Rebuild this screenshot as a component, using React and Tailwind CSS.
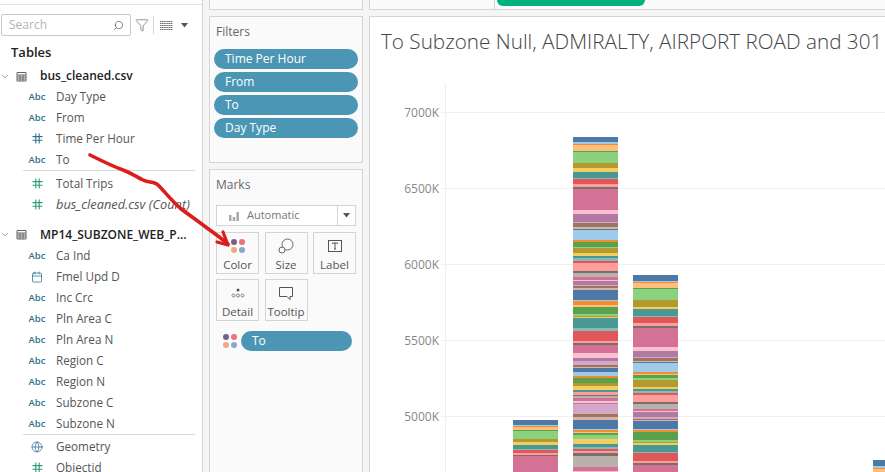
import React from 'react';
import { Search, Filter, ChevronDown, Calendar, Globe } from 'lucide-react';

const font = { fontFamily: '"Open Sans", sans-serif' };

const C = {
  blue: '#4e79a7', lblue: '#a0cbe8', orange: '#f28e2b', lorange: '#ffbe7d', green: '#59a14f',
  lgreen: '#8cd17d', olive: '#b6992d', yellow: '#f1ce63', teal: '#499894', lteal: '#86bcb6',
  red: '#e15759', lred: '#ff9d9a', grey: '#79706e', lgrey: '#bab0ac', pink: '#d37295',
  lpink: '#fabfd2', purple: '#b07aa1', lpurple: '#d4a6c8', brown: '#9d7660', lbrown: '#d7b5a6',
};

// stops are [color, end] in 3x zoom pixels, measured from the base y
const bars = [
  {
    x: 513, base: 295, start: 375,
    stops: [['blue', 390], ['lblue', 393], ['orange', 396], ['lorange', 405], ['green', 408], ['lgreen', 432], ['olive', 441], ['yellow', 450], ['teal', 462], ['lteal', 465], ['red', 474], ['lred', 480], ['grey', 483], ['pink', 531]],
  },
  {
    x: 573, base: 130, start: 21,
    stops: [['blue', 36], ['lblue', 42], ['orange', 45], ['lorange', 63], ['green', 66], ['lgreen', 99], ['olive', 114], ['yellow', 126], ['teal', 144], ['lteal', 148], ['red', 162], ['lred', 171], ['grey', 177], ['pink', 240], ['lpink', 252], ['purple', 276], ['lpurple', 279], ['brown', 291], ['lbrown', 297], ['blue', 300], ['lblue', 330], ['orange', 335], ['green', 351], ['lgreen', 354], ['olive', 369], ['yellow', 378], ['teal', 384], ['lteal', 393], ['red', 399], ['lred', 423], ['grey', 429], ['lgrey', 441], ['pink', 450], ['lpink', 453], ['purple', 465], ['lpurple', 468], ['brown', 474], ['lbrown', 480], ['blue', 510],
      ['lblue', 512], ['orange', 525], ['lorange', 531], ['green', 552], ['lgreen', 558], ['olive', 561], ['yellow', 564], ['teal', 594], ['lteal', 603], ['red', 633], ['lred', 639], ['grey', 645], ['pink', 669], ['lpink', 684], ['purple', 692], ['lpurple', 705], ['brown', 711], ['lbrown', 714], ['blue', 726], ['lblue', 738], ['orange', 744], ['green', 759], ['olive', 767], ['yellow', 780], ['teal', 786], ['lred', 795], ['grey', 798], ['lgrey', 804], ['pink', 813], ['lpink', 819], ['purple', 822], ['lpurple', 852], ['brown', 861], ['lbrown', 870], ['blue', 897], ['lblue', 900], ['orange', 906], ['lorange', 909], ['green', 914], ['lgreen', 927], ['yellow', 942], ['teal', 951], ['lteal', 957], ['red', 963], ['lred', 969], ['grey', 978], ['lgrey', 1011], ['pink', 1023], ['lpink', 1026]],
  },
  {
    x: 633, base: 130, start: 435,
    stops: [['blue', 453], ['lblue', 457], ['orange', 459], ['lorange', 474], ['green', 477], ['lgreen', 510],
      ['olive', 531], ['yellow', 537], ['teal', 558], ['lteal', 561], ['red', 579], ['lred', 588], ['grey', 594], ['pink', 651], ['lpink', 663], ['purple', 681], ['lpurple', 685], ['brown', 693], ['lbrown', 696], ['blue', 699], ['lblue', 726], ['orange', 731], ['lorange', 735], ['green', 744], ['lgreen', 750], ['olive', 771], ['yellow', 777], ['teal', 783], ['lteal', 789], ['red', 795], ['lred', 816], ['grey', 822], ['lgrey', 837], ['pink', 843], ['lpink', 846], ['purple', 861], ['lpurple', 867], ['brown', 870], ['lbrown', 873], ['blue', 897], ['lblue', 900], ['orange', 906], ['green', 930], ['lgreen', 936], ['olive', 939], ['yellow', 945], ['teal', 966], ['lteal', 969], ['red', 993], ['lred', 999], ['grey', 1004], ['pink', 1026]],
  },
  {
    x: 873, base: 400, start: 180,
    stops: [['blue', 198], ['lblue', 204], ['orange', 207], ['lorange', 216]],
  },
];

const gridLines = [
  { y: 112.5, label: '7000K' },
  { y: 188.5, label: '6500K' },
  { y: 264.5, label: '6000K' },
  { y: 340.5, label: '5500K' },
  { y: 416.5, label: '5000K' },
];

const Abc = () => <span className="text-[9.5px] font-semibold text-[#2f7292] leading-none">Abc</span>;

const Hash = ({ color }) => (
  <svg width="11" height="11" viewBox="0 0 11 11" fill="none" stroke={color} strokeWidth="1.1">
    <path d="M3.8 0.5V10.5M7.2 0.5V10.5M0.5 3.6H10.5M0.5 7.2H10.5" />
  </svg>
);

const TableIcon = () => (
  <svg width="11" height="11" viewBox="0 0 11 11" fill="none" stroke="#666" strokeWidth="1">
    <path d="M1 1.5H10V10H1ZM1 4H10M1 6H10M1 8H10M4 4V10M7 4V10" />
  </svg>
);

const Field = ({ icon, italic, children, className = 'h-[21px]' }) => (
  <div className={`flex items-center ${className}`}>
    <span className="w-[56px] pl-[18px] shrink-0 flex justify-center">{icon}</span>
    <span className={`text-[#555] whitespace-nowrap ${italic ? 'italic text-[12.8px]' : 'text-[11.7px]'}`}>{children}</span>
  </div>
);

const TableHead = ({ children, className = 'h-[21px]' }) => (
  <div className={`flex items-center ${className}`}>
    <ChevronDown size={11} className="ml-[-1px] text-[#777] w-[12px]" strokeWidth={1.5} />
    <span className="ml-[5px]"><TableIcon /></span>
    <span className="ml-[13px] text-[12px] font-semibold text-[#222] whitespace-nowrap">{children}</span>
  </div>
);

const Divider = () => <div className="ml-[23px] mr-[7px] h-px bg-[#d9d9d9]" />;

const Pill = ({ children, className = 'w-[144px]' }) => (
  <div className={`h-[20px] rounded-full bg-[#4a96b4] text-white text-[12px] font-medium pl-[11px] flex items-center ${className}`}>{children}</div>
);

const Dots = () => (
  <div className="grid grid-cols-2 gap-x-[2px] gap-y-[2px]">
    <span className="w-[6px] h-[6px] rounded-full bg-[#76608a]" />
    <span className="w-[6px] h-[6px] rounded-full bg-[#f0707f]" />
    <span className="w-[6px] h-[6px] rounded-full bg-[#f2a878]" />
    <span className="w-[6px] h-[6px] rounded-full bg-[#87a9cf]" />
  </div>
);

const MarkButton = ({ icon, label }) => (
  <div className="w-[43px] h-[42px] border border-[#d4d4d4] flex flex-col items-center justify-between pt-[5px] pb-[1px]">
    <div className="h-[16px] flex items-center">{icon}</div>
    <span className="text-[11.5px] leading-[14px] text-[#555]">{label}</span>
  </div>
);

export default function App() {
  return (
    <div className="relative w-[885px] h-[472px] overflow-hidden flex bg-[#f5f5f5]" style={font}>
      {/* Data pane */}
      <aside className="w-[203px] h-full shrink-0 bg-white border-r border-[#d4d4d4] pt-[4px]">
        <div className="h-px bg-[#e2e2e2]" />
        <div className="flex items-center pl-[1px] mt-[9px]">
          <div className="w-[130px] h-[22px] border border-[#c8c8c8] rounded-[2px] flex items-center justify-between pl-[7px] pr-[6px]">
            <span className="text-[12px] text-[#b5b5b5]">Search</span>
            <Search size={11} className="text-[#555] -scale-x-100" strokeWidth={1.5} />
          </div>
          <Filter size={14} className="ml-[4px] text-[#666]" strokeWidth={1.2} />
          <div className="ml-[4px] w-px h-[18px] bg-[#d4d4d4]" />
          <svg className="ml-[6px]" width="13" height="10" viewBox="0 0 13 10" stroke="#666" strokeWidth="1" strokeDasharray="1.5 0.6">
            <path d="M0 1.5H13M0 3.5H13M0 5.5H13M0 7.5H13M0 9.5H13" />
          </svg>
          <svg className="ml-[8px]" width="7" height="5" viewBox="0 0 7 5"><path d="M0 0H7L3.5 4.5Z" fill="#555" /></svg>
        </div>

        <div className="mt-[7px] pl-[11px] h-[18px] text-[13px] font-semibold text-[#222] leading-[18px]">Tables</div>

        <div className="mt-[5px]">
          <TableHead className="h-[20px]">bus_cleaned.csv</TableHead>
          <Field icon={<Abc />}>Day Type</Field>
          <Field icon={<Abc />}>From</Field>
          <Field icon={<Hash color="#2f7292" />}>Time Per Hour</Field>
          <Field icon={<Abc />}>To</Field>
          <Divider />
          <Field icon={<Hash color="#2f9c78" />} className="h-[21px] mt-[2px]">Total Trips</Field>
          <Field icon={<Hash color="#2f9c78" />} italic>bus_cleaned.csv (Count)</Field>
        </div>

        <div className="mt-[9px]">
          <TableHead>MP14_SUBZONE_WEB_P...</TableHead>
          <Field icon={<Abc />}>Ca Ind</Field>
          <Field icon={<Calendar size={12} className="text-[#2f7292]" strokeWidth={1.5} />}>Fmel Upd D</Field>
          <Field icon={<Abc />}>Inc Crc</Field>
          <Field icon={<Abc />}>Pln Area C</Field>
          <Field icon={<Abc />}>Pln Area N</Field>
          <Field icon={<Abc />}>Region C</Field>
          <Field icon={<Abc />}>Region N</Field>
          <Field icon={<Abc />}>Subzone C</Field>
          <Field icon={<Abc />}>Subzone N</Field>
          <Divider />
          <Field icon={<Globe size={12} className="text-[#2f7292]" strokeWidth={1.5} />} className="h-[21px] mt-[1px]">Geometry</Field>
          <Field icon={<Hash color="#2f9c78" />}>Objectid</Field>
        </div>
      </aside>

      {/* Shelves column */}
      <div className="w-[154px] ml-[6px] shrink-0 flex flex-col">
        <div className="h-[10px] bg-[#fafafa] border-x border-b border-[#d4d4d4]" />
        <section className="mt-[6px] h-[147px] bg-[#fafafa] border border-[#d4d4d4] pl-[4px] pr-[4px]">
          <div className="mt-[6px] pl-[2px] h-[18px] text-[12px] leading-[18px] text-[#666]">Filters</div>
          <div className="mt-[8px] flex flex-col gap-[3px]">
            <Pill>Time Per Hour</Pill>
            <Pill>From</Pill>
            <Pill>To</Pill>
            <Pill>Day Type</Pill>
          </div>
        </section>
        <section className="mt-[6px] flex-1 bg-[#fafafa] border border-[#d4d4d4] border-b-0 pl-[6px]">
          <div className="mt-[6px] h-[18px] text-[12px] leading-[18px] text-[#666]">Marks</div>
          <div className="mt-[11px] w-[140px] h-[21px] border border-[#d4d4d4] bg-white flex items-center">
            <svg className="ml-[12px]" width="10" height="10" viewBox="0 0 10 10" fill="#aaa"><path d="M0 4H2.5V10H0ZM3.7 6H6.2V10H3.7ZM7.4 1H10V10H7.4Z" /></svg>
            <span className="ml-[8px] flex-1 text-[11px] text-[#777]">Automatic</span>
            <div className="w-[18px] h-full border-l border-[#d4d4d4] flex items-center justify-center">
              <svg width="7" height="5" viewBox="0 0 7 5"><path d="M0 0H7L3.5 4.5Z" fill="#555" /></svg>
            </div>
          </div>
          <div className="mt-[6px] flex gap-[5.5px]">
            <MarkButton label="Color" icon={<Dots />} />
            <MarkButton label="Size" icon={
              <svg width="16" height="16" viewBox="0 0 16 16" fill="none" stroke="#666" strokeWidth="1"><circle cx="9.5" cy="6.500" r="5.5" /><circle cx="4" cy="12" r="3" fill="#fafafa" /></svg>
            } />
            <MarkButton label="Label" icon={
              <svg width="14" height="13" viewBox="0 0 14 13" fill="none" stroke="#555" strokeWidth="1"><rect x="0.5" y="0.5" width="13" height="11" /><path d="M4.5 4V3H9.5V4M7 3V9M6 9H8" /></svg>
            } />
          </div>
          <div className="mt-[5px] flex gap-[5.5px]">
            <MarkButton label="Detail" icon={
              <svg width="14" height="10" viewBox="0 0 14 10" fill="none" stroke="#666" strokeWidth="0.8"><circle cx="7" cy="2" r="1.5" fill="#555" stroke="none" /><circle cx="2.5" cy="7.5" r="1.5" /><circle cx="7" cy="7.5" r="1.5" /><circle cx="11.5" cy="7.5" r="1.5" /></svg>
            } />
            <MarkButton label="Tooltip" icon={
              <svg width="14" height="13" viewBox="0 0 14 13" fill="none" stroke="#555" strokeWidth="1"><path d="M0.5 0.5H13.5V9.5H11V12.5L8 9.5H0.5Z" /></svg>
            } />
          </div>
          <div className="mt-[10px] flex items-center">
            <span className="ml-[7px]"><Dots /></span>
            <Pill className="ml-[4px] w-[111px]">To</Pill>
          </div>
        </section>
      </div>

      {/* View */}
      <div className="ml-[6px] flex-1 flex flex-col min-w-0">
        <div className="h-[10px] bg-[#fafafa] border-l border-b border-[#d4d4d4] flex">
          <div className="ml-[124px] w-px bg-[#d4d4d4]" />
          <div className="ml-[2px] w-[148px] h-[6px] bg-[#00b180] rounded-b-[9px]" />
        </div>
        <main className="mt-[6px] flex-1 bg-white border-l border-t border-[#d4d4d4] relative overflow-hidden">
          <h1 className="pl-[11px] pt-[11px] text-[20.7px] leading-[26px] font-light text-[#444] whitespace-nowrap">
            To Subzone Null, ADMIRALTY, AIRPORT ROAD and 301
          </h1>
          {/* chart coords are page coords shifted by the main origin */}
          <svg className="absolute left-0 top-0" width="515" height="455" viewBox="370 17 515 455">
            <line x1="445.5" x2="445.5" y1="84" y2="472" stroke="#eeeeee" />
            {gridLines.map((g) => (
              <g key={g.label}>
                <line x1="441" x2="885" y1={g.y} y2={g.y} stroke="#f0f0f0" />
                <text x="439" y={g.y + 4} textAnchor="end" fontSize="12" fill="#888" style={font}>{g.label}</text>
              </g>
            ))}
            {bars.map((b) => {
              let prev = b.start;
              return b.stops.map(([c, end], i) => {
                const y = b.base + prev / 3;
                const h = (end - prev) / 3;
                prev = end;
                return <rect key={`${b.x}-${i}`} x={b.x} y={y} width="45" height={h} fill={C[c]} shapeRendering="crispEdges" />;
              });
            })}
          </svg>
        </main>
      </div>

      {/* Red annotation drawn on top of the screenshot */}
      <svg className="absolute left-0 top-0 pointer-events-none" width="885" height="472" viewBox="0 0 885 472" fill="none">
        <path d="M90 155C100 160 112 166 123 170C131 173 137 177 143 180C148 183 154 181 158 185C165 192 172 201 180 208C189 215 198 221 207 228C214 233 221 238 228 244" stroke="#dd1c1c" strokeWidth="3.6" strokeLinecap="round" strokeLinejoin="round" />
        <path d="M217 242L228 245L223 232" stroke="#dd1c1c" strokeWidth="3.2" strokeLinecap="round" strokeLinejoin="round" />
      </svg>
    </div>
  );
}
